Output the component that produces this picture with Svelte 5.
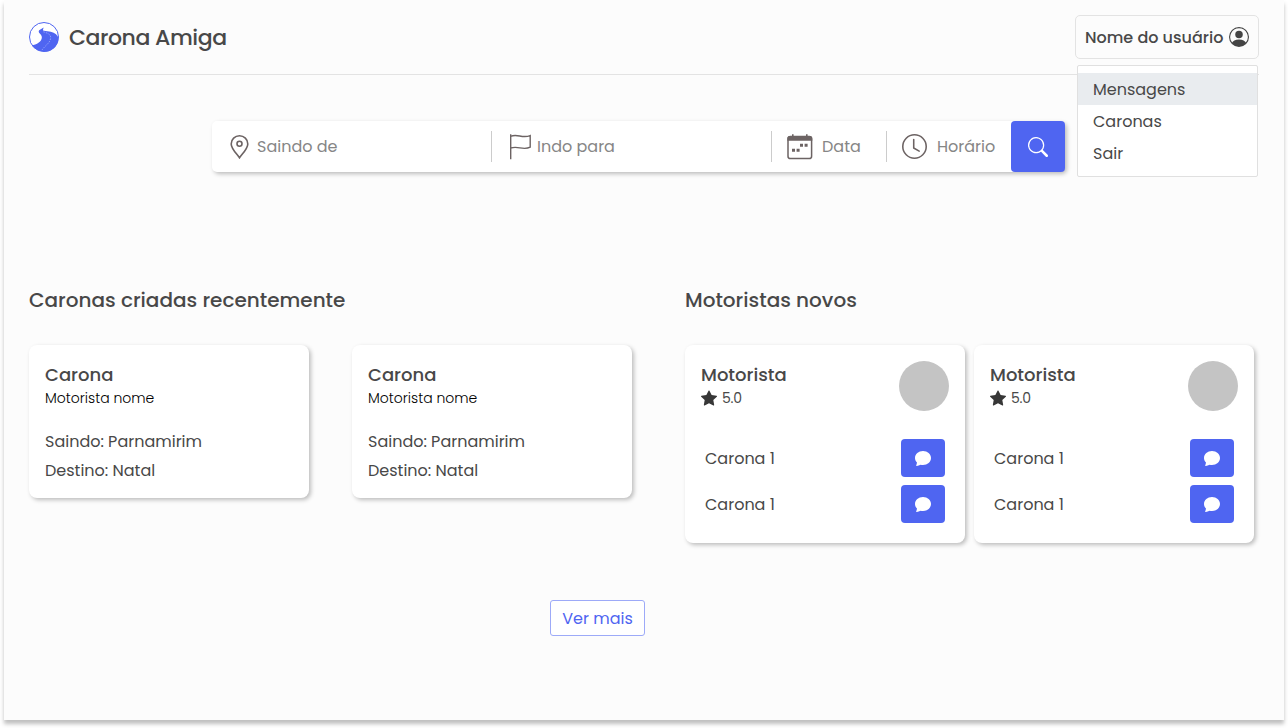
<script>
  const menu = ['Mensagens', 'Caronas', 'Sair'];
  const rides = [1, 2];
  const drivers = [1, 2];
  const trips = ['Carona 1', 'Carona 1'];
</script>

<div class="canvas">
<div class="page">
  <header>
    <div class="brand">
      <svg class="logo" width="30" height="30" viewBox="0 0 30 30">
        <circle cx="15" cy="15" r="14.5" fill="#fff" stroke="#4f65f1" stroke-width="1" />
        <path d="M14.6 5.6 10.2 8.2C9.2 9.6 9.8 10.6 11.2 12 14 14.8 13 18 9.8 20.6 7.5 22.4 5 23.2 2.9 23.6 9.5 32 22 31.8 27.3 23.5 29.8 19.5 29.6 16.5 29 14.8 26.8 11 23 9.8 18.5 9.3 15 9 13.4 8.6 14 7.8Z" fill="#4f65f1" />
        <path d="M14.4 9.8C17 10.6 21.7 11.8 21.7 15.5 21.5 21 16 23.5 13 28" fill="none" stroke="#b9c2ff" stroke-width=".6" stroke-dasharray="1.6 1.1" />
      </svg>
      <span class="name">Carona Amiga</span>
    </div>
    <div class="account">
      <button class="user">
        <span>Nome do usuário</span>
        <svg width="20" height="20" viewBox="0 0 16 16" fill="#444">
          <path d="M11 6a3 3 0 1 1-6 0 3 3 0 0 1 6 0z" />
          <path fill-rule="evenodd" d="M0 8a8 8 0 1 1 16 0A8 8 0 0 1 0 8zm8-7a7 7 0 0 0-5.468 11.37C3.242 11.226 4.805 10 8 10s4.757 1.225 5.468 2.37A7 7 0 0 0 8 1z" />
        </svg>
      </button>
      <ul class="menu">
        {#each menu as item, i}
          <li class:active={i === 0}><span>{item}</span></li>
        {/each}
      </ul>
    </div>
  </header>

  <form class="search">
    <label class="field from">
      <svg width="19" height="24" viewBox="0 0 19 24" fill="none" stroke="#6c6363" stroke-width="1.6">
        <path d="M9.5 22.8C7 19 1.2 13.7 1.2 8.9a8.3 8.1 0 0 1 16.6 0C17.8 13.7 12 19 9.5 22.8Z" />
        <circle cx="9.5" cy="8.8" r="2.5" />
      </svg>
      <span>Saindo de</span>
    </label>
    <label class="field to">
      <svg width="22" height="26" viewBox="0 0 22 26" fill="none" stroke="#6c6363" stroke-width="1.4">
        <path d="M.7 0.3V25.3M.7 2.3C7.5-.6 12 4.7 20.2 1.6V13.2C13 16.8 7.5 11.3 .7 14.2" />
      </svg>
      <span>Indo para</span>
    </label>
    <label class="field date">
      <svg width="26" height="26" viewBox="0 0 26 26">
        <rect x="1" y="2.6" width="23.6" height="22" rx="2.4" fill="none" stroke="#6c6363" stroke-width="1.5" />
        <path d="M.4 6.7V4.6A2.5 2.5 0 0 1 2.9 2H5V.3H6.6V2H19V.3H20.6V2H22.8A2.5 2.5 0 0 1 25.3 4.6V6.7Z" fill="#6c6363" />
        <path d="M13 9.8h3v3h-3zM17.6 9.8h3v3h-3zM5 14.7h3v3H5zM9.6 14.7h3v3h-3z" fill="#6c6363" />
      </svg>
      <span>Data</span>
    </label>
    <label class="field time">
      <svg width="25" height="25" viewBox="0 0 16 16" fill="#6c6363">
        <path d="M8 3.5a.5.5 0 0 0-1 0V9a.5.5 0 0 0 .252.434l3.5 2a.5.5 0 0 0 .496-.868L8 8.71V3.5z" />
        <path d="M8 16A8 8 0 1 0 8 0a8 8 0 0 0 0 16zm7-8A7 7 0 1 1 1 8a7 7 0 0 1 14 0z" />
      </svg>
      <span>Horário</span>
    </label>
    <button class="go" type="button" aria-label="Buscar">
      <svg width="20" height="20" viewBox="0 0 16 16" fill="#fff">
        <path d="M11.742 10.344a6.5 6.5 0 1 0-1.397 1.398h-.001c.03.04.062.078.098.115l3.85 3.85a1 1 0 0 0 1.415-1.414l-3.85-3.85a1.007 1.007 0 0 0-.115-.1zM12 6.5a5.5 5.5 0 1 1-11 0 5.5 5.5 0 0 1 11 0z" />
      </svg>
    </button>
  </form>

  <main>
    <section class="rides">
      <h2><span>Caronas criadas recentemente</span></h2>
      <div class="row">
        {#each rides as ride}
          <article class="card ride">
            <h3><span>Carona</span></h3>
            <p class="driver"><span>Motorista nome</span></p>
            <p class="origin"><span>Saindo: Parnamirim</span></p>
            <p class="dest"><span>Destino: Natal</span></p>
          </article>
        {/each}
      </div>
      <button class="more"><span>Ver mais</span></button>
    </section>
    <section class="drivers">
      <h2><span>Motoristas novos</span></h2>
      <div class="row">
        {#each drivers as driver}
          <article class="card">
            <div class="top">
              <div>
                <h3><span>Motorista</span></h3>
                <div class="rating">
                  <svg width="16" height="16" viewBox="0 0 16 16" fill="#373737">
                    <path d="M3.612 15.443c-.386.198-.824-.149-.746-.592l.83-4.73L.173 6.765c-.329-.314-.158-.888.283-.95l4.898-.696L7.538.792c.197-.39.73-.39.927 0l2.184 4.327 4.898.696c.441.062.612.636.282.95l-3.522 3.356.83 4.73c.078.443-.36.79-.746.592L8 13.187l-4.389 2.256z" />
                  </svg>
                  <span>5.0</span>
                </div>
              </div>
              <div class="avatar"></div>
            </div>
            {#each trips as trip}
              <div class="trip">
                <span>{trip}</span>
                <button aria-label="Conversar">
                  <svg width="16" height="16" viewBox="0 0 16 16" fill="#fff">
                    <path d="M8 15c4.418 0 8-3.134 8-7s-3.582-7-8-7-8 3.134-8 7c0 1.76.743 3.37 1.97 4.6-.097 1.016-.417 2.13-.771 2.966-.079.186.074.394.273.362 2.256-.37 3.597-.938 4.18-1.234A9.06 9.06 0 0 0 8 15z" />
                  </svg>
                </button>
              </div>
            {/each}
          </article>
        {/each}
      </div>
    </section>
  </main>
</div>
</div>

<style>
  :global(body) { background: #fff; }
  * { box-sizing: border-box; }
  .canvas { height: 728px; overflow: hidden; padding: 0 4px; background: #fff; }
  .page {
    width: 1280px; height: 720px; padding: 0 25px;
    background: #fcfcfc; box-shadow: 0 4px 4px rgba(0, 0, 0, .25);
    font: 400 16px/24px Poppins, Inter, sans-serif;
    color: #484848;
  }
  h2, h3, p, ul { margin: 0; padding: 0; font-weight: 400; }
  button { font: inherit; color: inherit; padding: 0; cursor: pointer; }
  span { white-space: nowrap; }
  svg { display: block; flex: none; }

  header { height: 75px; border-bottom: 1px solid #e3e3e3; display: flex; justify-content: space-between; align-items: flex-start; }
  .brand { display: flex; align-items: center; gap: 10px; padding-top: 22px; }
  .name { font-size: 22px; line-height: 30px; font-weight: 500; letter-spacing: -.46px; padding-top: 1px; margin-bottom: -1px; }
  .account { position: relative; padding-top: 15px; }
  .user { width: 184px; height: 44px; border: 1px solid #e3e3e3; border-radius: 5px; background: #fcfcfc; display: flex; align-items: center; justify-content: space-between; padding: 0 9px; font-weight: 500; }
  .user span { padding-top: 2px; }
  .menu { position: absolute; z-index: 2; top: 65px; left: 2px; width: 181px; height: 112px; padding: 7px 0; border: 1px solid #e0e0e0; border-radius: 2px; background: #fff; list-style: none; }
  .menu li { height: 32px; line-height: 34px; padding-left: 15px; }
  .menu .active { background: #e9ecef; }

  .search { width: 853px; height: 51px; margin: 46px 0 0 183px; display: flex; background: #fff; border-radius: 5px; box-shadow: 2px 2px 4px rgba(0, 0, 0, .25); }
  .field { display: flex; align-items: center; color: #868686; }
  .field span { padding-top: 1px; }
  .field + .field { border-left: 1px solid #ccc; height: 31px; margin-top: 10px; }
  .from { width: 279px; padding-left: 18px; gap: 8px; }
  .to { width: 280px; padding-left: 18px; gap: 5px; }
  .date { width: 115px; padding-left: 15px; gap: 9px; }
  .time { width: 125px; padding-left: 15px; gap: 10px; }
  .go { width: 54px; height: 51px; border: 0; border-radius: 4px; background: #4f65f1; display: grid; place-items: center; }

  main { display: flex; margin-top: 113px; }
  .rides { width: 656px; display: flex; flex-direction: column; }
  h2 { font-size: 20px; line-height: 30px; font-weight: 500; margin-bottom: 30px; }
  .row { display: flex; }
  .rides .row { gap: 43px; }
  .drivers .row { gap: 9px; }
  .card { width: 280px; height: 198px; border-radius: 8px; background: #fff; box-shadow: 2px 2px 4px rgba(0, 0, 0, .25); padding: 16px; }
  .ride { height: 153px; }
  h3 { font-size: 18px; line-height: 27px; font-weight: 500; }
  .driver { font-size: 14px; line-height: 20px; font-weight: 300; color: #000; }
  .origin { margin-top: 22px; }
  .dest { margin-top: 5px; }
  .more { width: 95px; height: 36px; margin: 102px 0 0 521px; border: 1px solid #9daaf8; border-radius: 3px; background: #fff; color: #4f65f1; }
  .more span { display: block; padding-top: 2px; }
  .top { display: flex; justify-content: space-between; height: 78px; }
  .rating { display: flex; align-items: center; gap: 5px; font-size: 14px; line-height: 20px; letter-spacing: -.2px; }
  .avatar { width: 50px; height: 50px; border-radius: 50%; background: #c4c4c4; }
  .trip { display: flex; align-items: center; justify-content: space-between; height: 38px; margin-bottom: 8px; padding: 0 4px; }
  .trip span { padding-top: 2px; }
  .trip button { width: 44px; height: 38px; border: 0; border-radius: 4px; background: #4f65f1; display: grid; place-items: center; }
</style>
